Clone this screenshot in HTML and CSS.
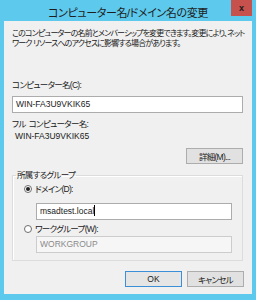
FILE: index.html
```html
<!DOCTYPE html>
<html lang="ja">
<head>
<meta charset="utf-8">
<link rel="stylesheet" href="styles.css">
</head>
<body>
<div class="window">
  <div class="titlebar">
    <div class="title">コンピューター名/ドメイン名の変更</div>
    <div class="close">x</div>
  </div>
  <div class="content">
    <p class="desc ja">このコンピューターの名前とメンバーシップを変更できます。変更により、ネット<br>ワーク リソースへのアクセスに影響する場合があります。</p>
    <div class="label ja lbl-name">コンピューター名(C):</div>
    <div class="textbox tb-name">WIN-FA3U9VKIK65</div>
    <div class="label ja lbl-full">フル<span class="sp"></span>コンピューター名:</div>
    <div class="label value">WIN-FA3U9VKIK65</div>
    <div class="row-right detail-row"><div class="button ja">詳細(M)...</div></div>
    <fieldset class="group">
      <legend class="ja">所属するグループ</legend>
      <div class="radio-row r-domain"><span class="radio checked"></span><span class="ja">ドメイン(D):</span></div>
      <div class="textbox tb-sub">msadtest.local<span class="caret"></span></div>
      <div class="radio-row r-wg"><span class="radio"></span><span class="ja">ワークグループ(W):</span></div>
      <div class="textbox tb-sub disabled">WORKGROUP</div>
    </fieldset>
    <div class="row-right buttons">
      <div class="button default">OK</div>
      <div class="button ja">キャンセル</div>
    </div>
  </div>
</div>
</body>
</html>
```
FILE: styles.css
```css
html, body { margin: 0; padding: 0; }
body {
  width: 256px;
  height: 300px;
  overflow: hidden;
  font-family: "Liberation Sans", "Noto Sans CJK JP", sans-serif;
  font-size: 8.5px;
  color: #1a1a1a;
}
.window {
  width: 256px;
  height: 300px;
  background: #5dc9ec;
  box-sizing: border-box;
  padding: 0 4px 6px 4px;
  display: flex;
  flex-direction: column;
}
.titlebar {
  height: 21px;
  flex: none;
  display: flex;
  justify-content: center;
  align-items: center;
  position: relative;
}
.title {
  font-size: 11px;
  color: #1d1d1d;
  font-feature-settings: "palt";
  letter-spacing: -0.4px;
  margin-top: 3px;
}
.close {
  position: absolute;
  right: 0;
  top: 0;
  width: 21px;
  height: 16px;
  background: #c7514c;
  color: #1a1a1a;
  font-weight: bold;
  font-size: 9px;
  display: flex;
  justify-content: center;
  align-items: center;
  font-family: "Liberation Sans", sans-serif;
}
.content {
  flex: 1;
  background: #f0f0f0;
  padding: 8px 8px 0 8px;
  display: flex;
  flex-direction: column;
  font-feature-settings: "palt";
}
.ja { letter-spacing: -0.7px; }
.sp { display: inline-block; width: 3px; }
.desc {
  margin: 0;
  line-height: 10px;
  font-size: 8px;
  letter-spacing: -0.85px;
  white-space: nowrap;
}
.label { line-height: 10px; height: 10px; white-space: nowrap; }
.lbl-name { margin-top: 31px; }
.textbox {
  background: #fff;
  border: 1px solid #acacac;
  box-sizing: border-box;
  height: 17px;
  line-height: 15px;
  padding-left: 3px;
  white-space: nowrap;
}
.tb-name { margin-top: 6px; width: 231px; }
.lbl-full { margin-top: 6px; }
.value { margin-top: 2px; padding-left: 3px; }
.row-right {
  display: flex;
  justify-content: flex-end;
  gap: 5px;
  width: 232px;
}
.detail-row { margin-top: 7px; width: 231px; }
.button {
  width: 57px;
  height: 16px;
  box-sizing: border-box;
  border: 1px solid #adadad;
  background: #e1e1e1;
  display: flex;
  justify-content: center;
  align-items: center;
  white-space: nowrap;
}
.button.default { border-color: #3c8fd6; background: #e5e5e5; }
.group {
  margin: 6px 0 0 0;
  padding: 4px 0 0 0;
  width: 231px;
  height: 91px;
  box-sizing: border-box;
  border: 1px solid #dcdcdc;
  box-shadow: inset 1px 1px 0 #fff;
  min-inline-size: 0;
}
.group legend {
  padding: 0 1px;
  margin-left: 3px;
  line-height: 10px;
  font-size: 8.5px;
}
.radio-row {
  display: flex;
  align-items: center;
  gap: 3px;
  margin-left: 11px;
  height: 10px;
  line-height: 10px;
}
.radio {
  width: 8px;
  height: 8px;
  box-sizing: border-box;
  border: 1px solid #6e6e6e;
  border-radius: 50%;
  background: #fff;
  display: flex;
  justify-content: center;
  align-items: center;
}
.radio.checked::after {
  content: "";
  width: 4px;
  height: 4px;
  border-radius: 50%;
  background: #222;
}
.tb-sub { margin-left: 23px; width: 196px; margin-top: 9px; }
.r-wg { margin-top: 4px; }
.tb-sub.disabled { margin-top: 2px; color: #8a8a8a; background: #f6f6f6; border-color: #cccccc; }
.caret {
  display: inline-block;
  width: 1px;
  height: 11px;
  background: #000;
  vertical-align: -2px;
}
.buttons { margin-top: 10px; width: 232px; }
```
